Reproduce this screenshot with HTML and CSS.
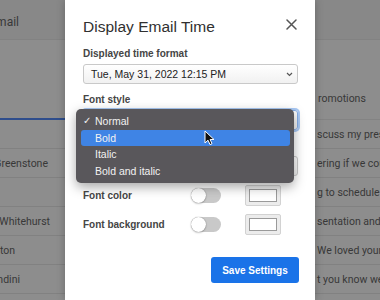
FILE: index.html
```html
<!DOCTYPE html>
<html>
<head>
    <title>Display Email Time</title>
    <meta name="viewport" content="width=device-width, initial-scale=1.0">
    <link rel="stylesheet" href="styles.css">
</head>
<body>
    <div class="page">
        <div class="side side-left">
            <div class="topbar"><span>Gmail</span></div>
            <div class="tabs tabs-left"></div>
            <div class="row"></div>
            <div class="row row-green"><span>Sarah Greenstone</span></div>
            <div class="row"></div>
            <div class="row row-wide"><span>Jon Whitehurst</span></div>
            <div class="row row-short"><span>Ben Ashton</span></div>
            <div class="row row-mid"><span>Rachel Ballandini</span></div>
        </div>

        <div class="modal">
            <div class="modal-head">
                <h2 class="modal-title">Display Email Time</h2>
                <svg class="close" width="11" height="11" viewBox="0 0 11 11">
                    <path d="M1 1 L10 10 M10 1 L1 10" stroke="#555" stroke-width="1.5" stroke-linecap="round"/>
                </svg>
            </div>

            <div class="label">Displayed time format</div>
            <div class="select">
                <span>Tue, May 31, 2022 12:15 PM</span>
                <svg width="7" height="5" viewBox="0 0 7 5"><polyline points="1,1 3.5,3.5 6,1" fill="none" stroke="#555" stroke-width="1.2"/></svg>
            </div>

            <div class="label">Font style</div>
            <div class="select select-focus">
                <span></span>
                <svg width="7" height="5" viewBox="0 0 7 5"><polyline points="1,1 3.5,3.5 6,1" fill="none" stroke="#555" stroke-width="1.2"/></svg>
            </div>

            <!-- hidden under the open menu -->
            <div class="label label-hidden"></div>
            <div class="select">
                <span></span>
                <svg width="7" height="5" viewBox="0 0 7 5"><polyline points="1,1 3.5,3.5 6,1" fill="none" stroke="#555" stroke-width="1.2"/></svg>
            </div>

            <div class="option-row">
                <span class="row-label">Font color</span>
                <span class="toggle"></span>
                <span class="swatch"><span class="swatch-fill"></span></span>
            </div>
            <div class="option-row">
                <span class="row-label">Font background</span>
                <span class="toggle"></span>
                <span class="swatch"><span class="swatch-fill"></span></span>
            </div>

            <div class="actions">
                <button class="save-btn">Save Settings</button>
            </div>

            <!-- open dropdown for Font style -->
            <div class="menu">
                <div class="menu-item"><span class="check">&#10003;</span>Normal</div>
                <div class="menu-item active"><span class="check"></span>Bold</div>
                <div class="menu-item"><span class="check"></span>Italic</div>
                <div class="menu-item"><span class="check"></span>Bold and italic</div>
            </div>

            <svg class="cursor" width="11" height="16" viewBox="0 0 11 16">
                <path d="M1 1 L1 13 L4 10.2 L6 14.6 L8 13.7 L6.1 9.5 L10 9.5 Z" fill="#111" stroke="#fff" stroke-width="1" stroke-linejoin="round"/>
            </svg>
        </div>

        <div class="side side-right">
            <div class="topbar"></div>
            <div class="tabs tabs-right"><span>romotions</span></div>
            <div class="row"><span>scuss my presentation</span></div>
            <div class="row"><span>ering if we could meet</span></div>
            <div class="row"><span>g to schedule a call</span></div>
            <div class="row"><span>sentation and the</span></div>
            <div class="row"><span>We loved your pitch</span></div>
            <div class="row"><span>t you know we are</span></div>
        </div>
    </div>
</body>
</html>
```

FILE: styles.css
```css
* {
    box-sizing: border-box;
}
body {
    margin: 0;
    background: #8d8d8d;
    font-family: "Liberation Sans", Arial, sans-serif;
}
.page {
    display: grid;
    grid-template-columns: 65px 250px 65px;
    width: 380px;
    height: 300px;
    overflow: hidden;
}

/* dimmed gmail behind the dialog */
.side {
    background: #8d8d8d;
    color: #383838;
    font-family: Roboto, sans-serif;
    font-size: 10.5px;
    overflow: hidden;
}
.topbar {
    height: 40px;
    background: #888888;
    border-bottom: 1px solid #828282;
    display: flex;
    align-items: center;
    justify-content: flex-end;
    padding: 4px 46px 0 0;
    font-size: 12px;
}
.tabs {
    height: 80px;
}
.tabs-left {
    border-bottom: 2px solid #2e4d8c;
}
.tabs-right {
    padding: 52px 0 0 3px;
    line-height: 14px;
    border-bottom: 1px solid #838383;
}
.row {
    height: 29px;
    border-bottom: 1px solid #818181;
    display: flex;
    align-items: center;
    white-space: nowrap;
}
.side-left .row {
    justify-content: flex-end;
    padding-right: 19px;
}
.side-left .row-green {
    padding-right: 17px;
}
.side-left .row-wide {
    padding-right: 15px;
}
.side-left .row-short {
    padding-right: 50px;
}
.side-left .row-mid {
    padding-right: 45px;
}
.side-right .row {
    padding-left: 2px;
}

/* dialog */
.modal {
    position: relative;
    z-index: 1;
    background: #fff;
    padding: 17px 17px 0 18px;
    box-shadow: 0 0 8px rgba(0, 0, 0, 0.25);
}
.modal-head {
    display: flex;
    justify-content: space-between;
    height: 21px;
}
.modal-title {
    margin: 0;
    font-size: 15.5px;
    font-weight: normal;
    line-height: 20px;
    color: #303030;
}
.close {
    margin-top: 2px;
    margin-right: 1px;
}
.label {
    margin: 10px 0 4px;
    font-size: 10px;
    font-weight: bold;
    line-height: 12px;
    color: #454545;
}
.label-hidden {
    height: 12px;
}
.select {
    height: 20px;
    border: 1px solid #c9c9c9;
    border-radius: 3px;
    background: linear-gradient(#ffffff, #f1f1f1);
    display: flex;
    align-items: center;
    justify-content: space-between;
    padding: 0 4px 0 7px;
    font-size: 10.5px;
    color: #222;
}
.select-focus {
    border-color: #86aee8;
    box-shadow: 0 0 0 2px #a9c9f5;
}
.option-row {
    display: grid;
    grid-template-columns: 108px 54px 36px;
    align-items: center;
    height: 21px;
    margin-top: 9px;
}
.option-row + .option-row {
    margin-top: 8px;
}
.row-label {
    font-size: 10px;
    font-weight: bold;
    color: #454545;
}
.toggle {
    position: relative;
    width: 30px;
    height: 15px;
    border-radius: 8px;
    background: #c9c9c9;
}
.toggle::after {
    content: "";
    position: absolute;
    left: 0;
    top: 0;
    width: 15px;
    height: 15px;
    border-radius: 50%;
    background: #fff;
    box-shadow: 0 0 1px rgba(0, 0, 0, 0.45), 0 1px 2px rgba(0, 0, 0, 0.2);
}
.swatch {
    width: 36px;
    height: 21px;
    border: 1px solid #d2d2d2;
    border-radius: 2px;
    background: #ececec;
    display: flex;
    align-items: center;
    justify-content: center;
}
.swatch-fill {
    width: 28px;
    height: 13px;
    background: #fff;
    border: 1px solid #9a9a9a;
}
.actions {
    display: flex;
    justify-content: flex-end;
    margin-top: 22px;
}
.save-btn {
    width: 88px;
    height: 26px;
    border: none;
    border-radius: 3px;
    background: #1a73e8;
    color: #fff;
    font-family: "Liberation Sans", Arial, sans-serif;
    font-size: 10px;
    font-weight: bold;
    margin-right: -1px;
}

/* native-looking popup menu */
.menu {
    position: absolute;
    left: 11px;
    top: 109px;
    width: 218px;
    height: 74px;
    padding: 4px 4px 4px 5px;
    border-radius: 5px;
    background: #59575b;
    box-shadow: 0 4px 12px rgba(0, 0, 0, 0.35);
    color: #f2f2f2;
    font-size: 10.5px;
}
.menu-item {
    display: flex;
    height: 16.5px;
    line-height: 16.5px;
    border-radius: 3px;
}
.menu-item.active {
    background: #3f84e5;
}
.check {
    width: 14px;
    padding-left: 2px;
    font-family: "DejaVu Sans", sans-serif;
    font-size: 10px;
}
.cursor {
    position: absolute;
    left: 139px;
    top: 130px;
}
```
